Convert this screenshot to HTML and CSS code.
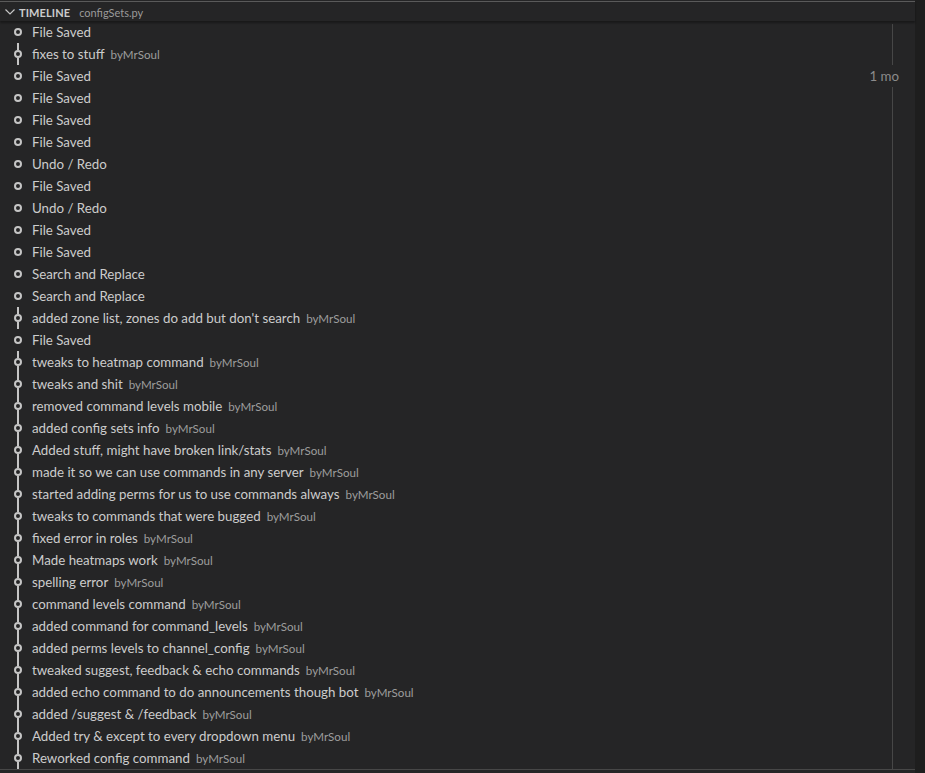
FILE: index.html
```html
<!DOCTYPE html>
<html lang="en">
<head>
  <meta charset="UTF-8">
  <title>Timeline</title>
  <link rel="stylesheet" href="styles.css">
</head>
<body>
  <div class="workbench">
    <div class="pane">
      <div class="pane-header">
        <svg class="chevron" width="16" height="16" viewBox="0 0 16 16"><path d="M3.5 5.5 L8 10 L12.5 5.5" fill="none" stroke="#c5c5c5" stroke-width="1.2"/></svg>
        <span class="title">TIMELINE</span>
        <span class="subtitle">configSets.py</span>
      </div>
      <div class="timeline">
        <div class="row"><span class="icon dot"></span><span class="label">File Saved</span></div>
        <div class="row"><span class="icon commit"></span><span class="label">fixes to stuff</span><span class="desc">byMrSoul</span></div>
        <div class="row"><span class="icon dot"></span><span class="label">File Saved</span><span class="age">1 mo</span></div>
        <div class="row"><span class="icon dot"></span><span class="label">File Saved</span></div>
        <div class="row"><span class="icon dot"></span><span class="label">File Saved</span></div>
        <div class="row"><span class="icon dot"></span><span class="label">File Saved</span></div>
        <div class="row"><span class="icon dot"></span><span class="label">Undo / Redo</span></div>
        <div class="row"><span class="icon dot"></span><span class="label">File Saved</span></div>
        <div class="row"><span class="icon dot"></span><span class="label">Undo / Redo</span></div>
        <div class="row"><span class="icon dot"></span><span class="label">File Saved</span></div>
        <div class="row"><span class="icon dot"></span><span class="label">File Saved</span></div>
        <div class="row"><span class="icon dot"></span><span class="label">Search and Replace</span></div>
        <div class="row"><span class="icon dot"></span><span class="label">Search and Replace</span></div>
        <div class="row"><span class="icon commit"></span><span class="label">added zone list, zones do add but don't search</span><span class="desc">byMrSoul</span></div>
        <div class="row"><span class="icon dot"></span><span class="label">File Saved</span></div>
        <div class="row"><span class="icon commit"></span><span class="label">tweaks to heatmap command</span><span class="desc">byMrSoul</span></div>
        <div class="row"><span class="icon commit"></span><span class="label">tweaks and shit</span><span class="desc">byMrSoul</span></div>
        <div class="row"><span class="icon commit"></span><span class="label">removed command levels mobile</span><span class="desc">byMrSoul</span></div>
        <div class="row"><span class="icon commit"></span><span class="label">added config sets info</span><span class="desc">byMrSoul</span></div>
        <div class="row"><span class="icon commit"></span><span class="label">Added stuff, might have broken link/stats</span><span class="desc">byMrSoul</span></div>
        <div class="row"><span class="icon commit"></span><span class="label">made it so we can use commands in any server</span><span class="desc">byMrSoul</span></div>
        <div class="row"><span class="icon commit"></span><span class="label">started adding perms for us to use commands always</span><span class="desc">byMrSoul</span></div>
        <div class="row"><span class="icon commit"></span><span class="label">tweaks to commands that were bugged</span><span class="desc">byMrSoul</span></div>
        <div class="row"><span class="icon commit"></span><span class="label">fixed error in roles</span><span class="desc">byMrSoul</span></div>
        <div class="row"><span class="icon commit"></span><span class="label">Made heatmaps work</span><span class="desc">byMrSoul</span></div>
        <div class="row"><span class="icon commit"></span><span class="label">spelling error</span><span class="desc">byMrSoul</span></div>
        <div class="row"><span class="icon commit"></span><span class="label">command levels command</span><span class="desc">byMrSoul</span></div>
        <div class="row"><span class="icon commit"></span><span class="label">added command for command_levels</span><span class="desc">byMrSoul</span></div>
        <div class="row"><span class="icon commit"></span><span class="label">added perms levels to channel_config</span><span class="desc">byMrSoul</span></div>
        <div class="row"><span class="icon commit"></span><span class="label">tweaked suggest, feedback &amp; echo commands</span><span class="desc">byMrSoul</span></div>
        <div class="row"><span class="icon commit"></span><span class="label">added echo command to do announcements though bot</span><span class="desc">byMrSoul</span></div>
        <div class="row"><span class="icon commit"></span><span class="label">added /suggest &amp; /feedback</span><span class="desc">byMrSoul</span></div>
        <div class="row"><span class="icon commit"></span><span class="label">Added try &amp; except to every dropdown menu</span><span class="desc">byMrSoul</span></div>
        <div class="row"><span class="icon commit"></span><span class="label">Reworked config command</span><span class="desc">byMrSoul</span></div>
      </div>
      <div class="pane-footer"></div>
    </div>
    <div class="edge"></div>
  </div>
</body>
</html>
```

FILE: styles.css
```css
html, body {
  margin: 0;
  padding: 0;
  height: 100%;
  background: #252526;
}
body {
  font-family: Lato, "Noto Sans", sans-serif;
  font-size: 13.3px;
  color: #cccccc;
  overflow: hidden;
}
.workbench {
  display: flex;
  height: 773px;
}
.pane {
  width: 915px;
  display: flex;
  flex-direction: column;
  background: #252526;
}
.edge {
  flex: 1;
  background: #1e1e1e;
}
.pane-header {
  height: 19px;
  margin-top: 1px;
  border-top: 1px solid #5a5a5a;
  display: flex;
  align-items: center;
  box-shadow: 0 2px 2px rgba(0, 0, 0, 0.35);
  position: relative;
  z-index: 2;
}
.chevron {
  margin-left: 2px;
  margin-right: 1px;
  margin-top: 1px;
}
.title {
  font-size: 11px;
  font-weight: bold;
  color: #cccccc;
  letter-spacing: 0.1px;
  padding-top: 1px;
}
.subtitle {
  font-size: 11px;
  color: #9a9a9a;
  margin-left: 9px;
  padding-top: 1px;
}
.timeline {
  position: relative;
  height: 748px;
}
.timeline::after {
  content: "";
  position: absolute;
  left: 892px;
  top: 3px;
  bottom: 0;
  width: 1px;
  background: #474747;
}
.row {
  height: 22px;
  display: flex;
  align-items: center;
  position: relative;
}
.icon {
  width: 16px;
  height: 22px;
  margin-left: 10px;
  margin-right: 6px;
  position: relative;
  flex: none;
}
.icon::before {
  content: "";
  position: absolute;
  left: 4px;
  top: 7px;
  width: 4px;
  height: 4px;
  border: 2px solid #c5c5c5;
  border-radius: 50%;
}
.commit::after {
  content: "";
  position: absolute;
  left: 7px;
  top: 0;
  width: 2px;
  height: 22px;
  background: linear-gradient(#c5c5c5 0 7px, transparent 7px 15px, #c5c5c5 15px);
}
.label {
  white-space: nowrap;
}
.desc {
  font-size: 11.6px;
  color: #9d9d9d;
  margin-left: 6px;
  white-space: nowrap;
}
.age {
  margin-left: auto;
  margin-right: 16px;
  padding: 0 0 0 6px;
  height: 22px;
  line-height: 22px;
  color: #8b8b8b;
  background: #252526;
  position: relative;
  z-index: 1;
}
.pane-footer {
  height: 1px;
  background: #474747;
}
```
